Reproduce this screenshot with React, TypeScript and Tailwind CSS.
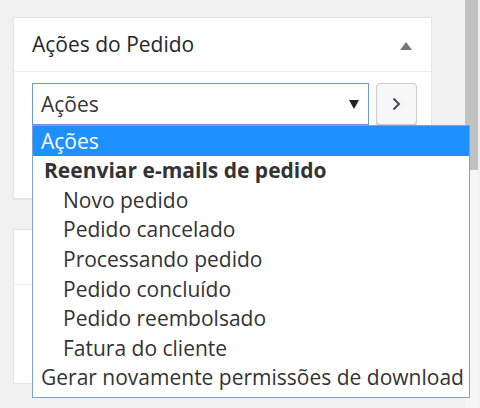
import React from "react";

const items: { label: string; kind: "sel" | "group" | "sub" | "top" }[] = [
  { label: "Ações", kind: "sel" },
  { label: "Reenviar e-mails de pedido", kind: "group" },
  { label: "Novo pedido", kind: "sub" },
  { label: "Pedido cancelado", kind: "sub" },
  { label: "Processando pedido", kind: "sub" },
  { label: "Pedido concluído", kind: "sub" },
  { label: "Pedido reembolsado", kind: "sub" },
  { label: "Fatura do cliente", kind: "sub" },
  { label: "Gerar novamente permissões de download", kind: "top" },
];

export default function App() {
  return (
    <div
      className="flex h-[408px] w-[480px] overflow-hidden bg-[#f1f1f1]"
      style={{ fontFamily: '"Open Sans", "Noto Sans", sans-serif' }}
    >
      <div className="flex w-[465px] flex-col pl-[13px] pt-[17px]">
        <div className="w-[419px] border border-[#e5e5e5] bg-white shadow-[0_1px_1px_rgba(0,0,0,0.04)]">
          <div className="flex h-[54px] items-center justify-between border-b border-[#eeeeee] pl-[18px] pr-[19px]">
            <span className="text-[21px] leading-none text-[#23282d]">Ações do Pedido</span>
            <svg width="12" height="8" viewBox="0 0 12 8" className="mt-[2px]">
              <polygon points="6,0 12,8 0,8" fill="#72777c" />
            </svg>
          </div>
          <div className="flex gap-[7px] pb-[73px] pl-[18px] pt-[11px]">
            <div className="relative">
              <div className="flex h-[42px] w-[337px] items-center justify-between border border-[#6c9ad6] bg-white pl-[8px] pr-[9px]">
                <span className="text-[21px] leading-none text-[#32373c]">Ações</span>
                <svg width="10" height="9" viewBox="0 0 10 9">
                  <polygon points="0,0 10,0 5,9" fill="#222" />
                </svg>
              </div>
              <div className="absolute left-0 top-[42px] z-10 w-[438px] border border-[#7d9fdc] bg-white pb-[4px]">
                {items.map((it) => (
                  <div
                    key={it.label}
                    className={
                      it.kind === "sel"
                        ? "flex h-[30px] items-center bg-[#1e90ff] pl-[8px] text-[21px] leading-none text-white"
                        : it.kind === "group"
                        ? "flex h-[29.6px] items-center pl-[11px] text-[21px] leading-none font-bold text-[#333333]"
                        : it.kind === "sub"
                        ? "flex h-[29.6px] items-center pl-[30px] text-[21px] leading-none text-[#333333]"
                        : "flex h-[29.6px] items-center whitespace-nowrap pl-[8px] text-[21px] leading-none text-[#333333]"
                    }
                  >
                    {it.label}
                  </div>
                ))}
              </div>
            </div>
            <div className="flex h-[42px] w-[41px] items-center justify-center rounded-[4px] border border-[#cccccc] bg-[#f7f7f7] shadow-[0_1px_0_#cccccc]">
              <svg width="9" height="14" viewBox="0 0 9 14">
                <polyline points="1.5,1.5 7,7 1.5,12.5" fill="none" stroke="#444c5a" strokeWidth="2" />
              </svg>
            </div>
          </div>
        </div>
        <div className="mt-[30px] h-[155px] w-[419px] border border-[#e5e5e5] bg-white">
          <div className="h-[55px] border-b border-[#eeeeee]" />
        </div>
      </div>
      <div className="flex w-[13px] flex-col">
        <div className="h-[170px] bg-[#c1c1c1]" />
        <div className="flex-1 bg-[#f6f6f6]" />
      </div>
      <div className="w-[2px] bg-[#f1f1f1]" />
    </div>
  );
}
